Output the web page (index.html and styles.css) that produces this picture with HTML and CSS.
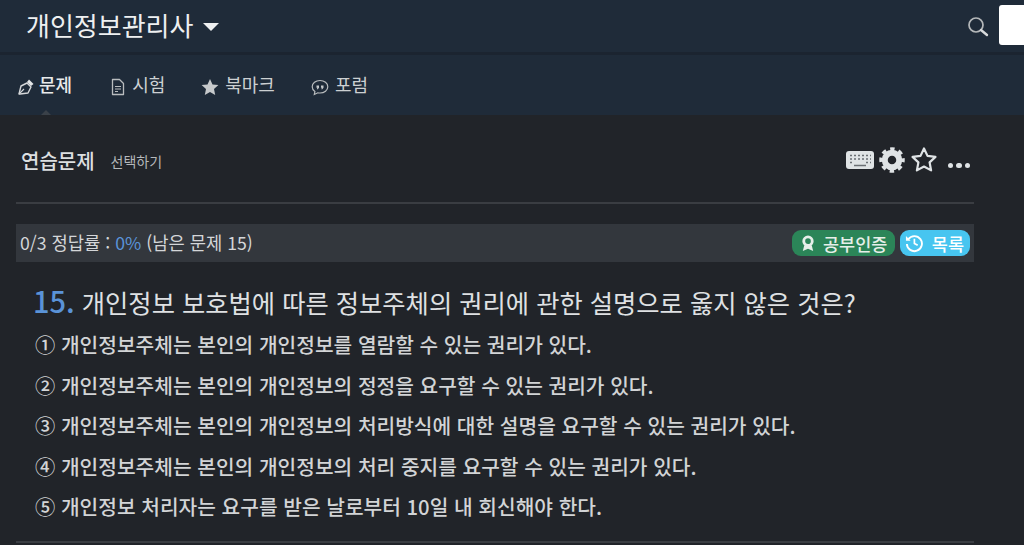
FILE: index.html
```html
<!DOCTYPE html>
<html lang="ko">
<head>
<meta charset="utf-8">
<title>개인정보관리사</title>
<link rel="stylesheet" href="styles.css">
</head>
<body>
<header class="topbar">
  <div class="brand"><span>개인정보관리사</span><i class="caret"></i></div>
  <div class="top-right">
    <svg class="search" viewBox="0 0 22 22"><circle cx="9" cy="9" r="7" fill="none" stroke="#b5b8ba" stroke-width="1.7"/><path d="M14 14l6 5" stroke="#d8dadb" stroke-width="2.4" stroke-linecap="round"/></svg>
    <div class="searchbox"></div>
  </div>
</header>
<nav class="tabs">
  <a class="tab active"><svg class="ic" viewBox="0 0 18 18"><path d="M2 16l2-8 6-3 4 4-3 6-8 1z" fill="none" stroke="#d4d6d8" stroke-width="1.4" stroke-linejoin="round"/><path d="M10 4l2-2.500 4.500 4.500-2.500 2z" fill="#e4e6e7"/><path d="M2 16l5-5" stroke="#d4d6d8" stroke-width="1.100"/></svg><span>문제</span></a>
  <a class="tab t2"><svg class="ic" viewBox="0 0 18 18"><path d="M3.500 1.500h7l4 4v11h-11z" fill="none" stroke="#b9bcbe" stroke-width="1.300" stroke-linejoin="round"/><path d="M6 8.500h6M6 11h6M6 13.500h3" stroke="#b9bcbe" stroke-width="1"/></svg><span>시험</span></a>
  <a class="tab t3"><svg class="ic" viewBox="0 0 18 18"><path d="M9 1l2.500 5.400 5.900.7-4.400 4 1.200 5.900L9 14.100 3.800 17 5 11.100.6 7.100l5.900-.7z" fill="#c6c9cb"/></svg><span>북마크</span></a>
  <a class="tab t4"><svg class="ic" viewBox="0 0 18 18"><path d="M9 2.500c4.400 0 7.800 2.800 7.800 6.300S13.400 15 9 15c-.8 0-1.600-.1-2.200-.2L3.300 16.500l.6-3C2.200 12.400 1.200 10.700 1.200 8.800 1.200 5.300 4.600 2.500 9 2.500z" fill="none" stroke="#b9bcbe" stroke-width="1.200"/><path d="M5.500 7.500h2.500v2.200l-1.200 1.500h-1l.6-1.400h-.9zM10 7.500h2.500v2.200l-1.200 1.500h-1l.6-1.400H10z" fill="#c6c9cb"/></svg><span>포럼</span></a>
</nav>
<main class="content">
  <div class="head">
    <div class="head-left"><h2>연습문제</h2><span class="pick">선택하기</span></div>
    <div class="head-icons">
      <svg class="kbd" viewBox="0 0 28 20"><rect x="0" y="1" width="28" height="18" rx="3" fill="#dfe3e5"/><path d="M4 5.500h2M8 5.500h2M12 5.500h2M16 5.500h2M20 5.500h2M24 5.500h1M4 9h2M8 9h2M12 9h2M16 9h2M20 9h2M24 9h1M4 12.500h2M20 12.500h2M24 12.500h1M8 15.500h12" stroke="#6a6f74" stroke-width="1.400"/></svg>
      <svg class="gear" viewBox="0 0 26 26"><circle cx="13" cy="13" r="7.250" fill="none" stroke="#dfe3e5" stroke-width="6"/><circle cx="13" cy="13" r="10.500" fill="none" stroke="#dfe3e5" stroke-width="4.500" stroke-dasharray="4.200 4.050" stroke-dashoffset="2.100"/></svg>
      <svg class="star" viewBox="0 0 28 28"><path d="M14 2.500l3.500 7.400 8 1-5.900 5.500 1.500 8L14 20.500l-7.100 3.900 1.500-8-5.900-5.500 8-1z" fill="none" stroke="#dfe3e5" stroke-width="2.200" stroke-linejoin="round"/></svg>
      <span class="dots"><i></i><i></i><i></i></span>
    </div>
  </div>
  <div class="status">
    <div class="status-text">0/3 정답률 : <b>0%</b> (남은 문제 15)</div>
    <div class="badges">
      <span class="badge green"><svg viewBox="0 0 16 18"><circle cx="8" cy="6.500" r="4.500" fill="none" stroke="#e6efe9" stroke-width="3"/><path d="M4 11l-1.500 6 5.500-2.500 5.500 2.500L12 11z" fill="#e6efe9"/></svg>공부인증</span>
      <span class="badge blue"><svg viewBox="0 0 20 20"><path d="M3.500 6A8 8 0 1 1 2 11" fill="none" stroke="#fff" stroke-width="2"/><path d="M1 2.500v5h5z" fill="#fff"/><path d="M10 5.500V10.500l3.500 2" fill="none" stroke="#fff" stroke-width="1.800"/></svg>목록</span>
    </div>
  </div>
  <section class="question">
    <h1><em>15.</em> 개인정보 보호법에 따른 정보주체의 권리에 관한 설명으로 옳지 않은 것은?</h1>
    <ol class="choices">
      <li>① 개인정보주체는 본인의 개인정보를 열람할 수 있는 권리가 있다.</li>
      <li>② 개인정보주체는 본인의 개인정보의 정정을 요구할 수 있는 권리가 있다.</li>
      <li>③ 개인정보주체는 본인의 개인정보의 처리방식에 대한 설명을 요구할 수 있는 권리가 있다.</li>
      <li>④ 개인정보주체는 본인의 개인정보의 처리 중지를 요구할 수 있는 권리가 있다.</li>
      <li>⑤ 개인정보 처리자는 요구를 받은 날로부터 10일 내 회신해야 한다.</li>
    </ol>
  </section>
  <hr class="rule">
</main>
</body>
</html>
```
FILE: styles.css
```css
* { box-sizing: border-box; }
html, body { margin: 0; padding: 0; }
body {
  width: 1024px; height: 545px; overflow: hidden;
  background: #212429;
  color: #dfe1e3;
  font-family: "Noto Sans CJK KR", "Noto Sans", sans-serif;
}
.topbar {
  height: 55px; background: #1f2b39;
  display: flex; justify-content: space-between; align-items: center;
  padding: 0 0 0 26px;
  border-bottom: 3px solid #1b2430;
}
.brand { display: flex; align-items: center; gap: 10px; font-size: 26px; color: #eef0f1; line-height: 1; margin-top: -3px; }
.caret { width: 0; height: 0; border-left: 8px solid transparent; border-right: 8px solid transparent; border-top: 8px solid #eef0f1; margin-top: 5px; }
.top-right { display: flex; align-items: center; gap: 10px; }
.search { width: 22px; height: 22px; margin-top: 2px; }
.searchbox { width: 25px; height: 40px; background: #fff; border-radius: 3px 0 0 3px; margin-top: -2px; }
.tabs {
  height: 60px; background: #1f2b39;
  display: flex; align-items: center;
  padding: 0 0 0 17px;
  position: relative;
}
.tab { display: flex; align-items: center; gap: 6px; font-size: 18px; color: #ccd0d2; position: relative; }
.tab span { position: relative; top: -1px; }
.tab .ic { width: 18px; height: 18px; margin-top: 4px; }
.active { color: #e8eaeb; font-weight: 500; gap: 4px; }
.active::after {
  content: ""; position: absolute; left: 24px; bottom: -17px;
  width: 0; height: 0;
  border-left: 5px solid transparent; border-right: 5px solid transparent; border-bottom: 5px solid #3a4149;
}
.t2 { margin-left: 37px; gap: 5px; }
.t3 { margin-left: 36px; }
.t4 { margin-left: 36px; }
.content { width: 974px; padding: 0 0 0 16px; }
.head { height: 89px; border-bottom: 2px solid #3a3d42; display: flex; justify-content: space-between; align-items: center; padding: 5px 0 0 5px; }
.head-left { display: flex; align-items: center; gap: 16px; }
.head h2 { margin: 0; font-size: 20px; font-weight: 500; color: #dcdfe0; line-height: 1; }
.pick { font-size: 14px; color: #b5b8bb; }
.head-icons { display: flex; align-items: center; margin: 0 4px 3px 0; }
.kbd { width: 28px; height: 20px; }
.gear { width: 26px; height: 26px; margin-left: 5px; }
.star { width: 28px; height: 28px; margin-left: 5px; }
.dots { display: flex; gap: 3px; margin-left: 10px; margin-top: 12px; }
.dots i { width: 5.500px; height: 5.500px; border-radius: 50%; background: #dfe3e5; }
.status {
  margin-top: 20px; height: 38px; background: #33373d;
  display: flex; justify-content: space-between; align-items: center;
  padding: 0 4px 0 4px;
}
.status-text { font-size: 17.700px; color: #d4d6d8; white-space: nowrap; margin-top: -2px; }
.status-text b { font-weight: 400; color: #5a93d8; }
.badges { display: flex; gap: 5px; }
.badge { height: 26px; border-radius: 9px; display: flex; align-items: center; gap: 7px; font-size: 17.500px; font-weight: 500; color: #e6efe9; padding: 0 6px 0 8px; white-space: nowrap; }
.badge svg { width: 16px; height: 17px; }
.green { background: #2b8558; width: 103px; }
.blue { background: #47c5f0; color: #fff; width: 70px; padding-left: 5px; gap: 8px; }
.blue svg { width: 20px; height: 20px; }
.question { padding: 18px 0 0 17px; }
.question h1 { margin: 0; font-size: 25.300px; font-weight: 400; line-height: 40px; color: #dfe1e3; white-space: nowrap; }
.question em { font-style: normal; font-size: 29px; font-weight: 500; color: #5a93d8; }
.choices { list-style: none; margin: 0; padding: 2px 0 0 2px; }
.choices li { font-size: 20.300px; font-weight: 500; line-height: 40.500px; color: #d2d4d6; white-space: nowrap; }
.rule { border: 0; height: 2px; background: #3a3d42; margin: 14px 0 0 0; }
```
